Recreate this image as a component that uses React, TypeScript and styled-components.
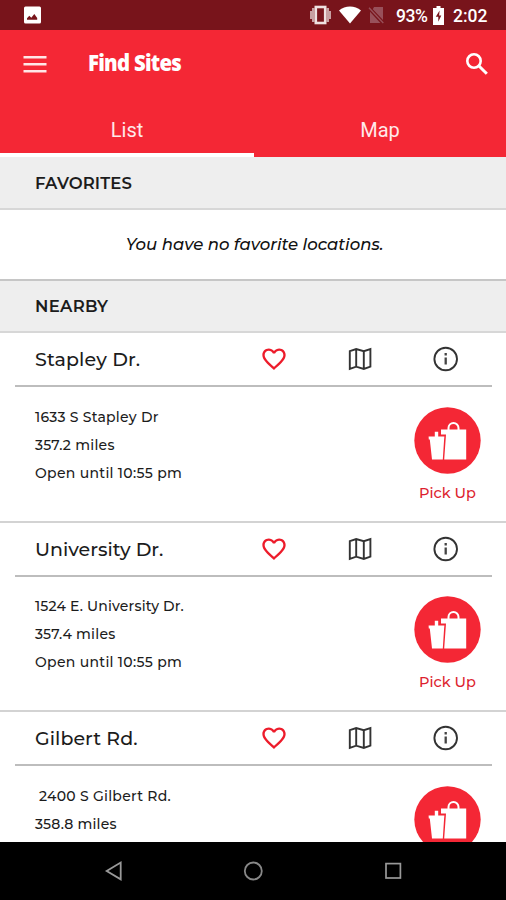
import React from "react";
import styled, { createGlobalStyle } from "styled-components";

const Global = createGlobalStyle`
  * { box-sizing: border-box; }
  body { margin: 0; background: #fff; font-family: Montserrat, Inter, sans-serif; }
`;

const Screen = styled.div`
  width: 506px;
  height: 900px;
  display: flex;
  flex-direction: column;
  overflow: hidden;
  background: #fff;
  color: #1c1c1c;
`;

const StatusBar = styled.div`
  height: 30px;
  flex: none;
  display: flex;
  align-items: center;
  padding: 0 18px 0 23px;
  background: #78141b;
  color: #fff;
  font: 500 17.5px/30px Roboto, sans-serif;
  svg { display: block; flex: none; }
`;

const StatusIcons = styled.div`
  margin-left: auto;
  display: flex;
  align-items: center;
`;

const Signals = styled.div`
  display: flex;
  align-items: center;
  gap: 7px;
`;

const Percent = styled.span`
  margin-left: 11.5px;
  width: 37px;
  letter-spacing: -0.45px;
  padding-top: 2px;
`;

const Clock = styled.span`
  margin-left: 9px;
  width: 35px;
  padding-top: 2px;
`;

const Header = styled.header`
  height: 127px;
  flex: none;
  display: flex;
  flex-direction: column;
  background: #f42735;
  color: #fff;
`;

const TitleBar = styled.div`
  height: 70px;
  display: flex;
  align-items: center;
  padding: 0 17px 2px 23px;
  svg { display: block; flex: none; }
`;

const Title = styled.h1`
  margin: 0 auto 0 41px;
  padding-bottom: 4px;
  font: 900 22px/30px "Noto Sans", sans-serif;
  letter-spacing: -0.8px;
  white-space: nowrap;
  transform: scaleX(0.925);
  transform-origin: left;
`;

const Tabs = styled.nav`
  flex: 1;
  display: grid;
  grid-template-columns: 254px 252px;
`;

const Tab = styled.div<{ $active?: boolean }>`
  padding-top: 19px;
  text-align: center;
  font: 400 20px/22px Roboto, sans-serif;
  color: #ffe9ea;
  border-bottom: 4px solid ${(p) => (p.$active ? "#fff" : "transparent")};
`;

const SectionHeading = styled.h2<{ $track: number; $height: number }>`
  margin: 0;
  flex: none;
  height: ${(p) => p.$height}px;
  padding-left: 35px;
  display: flex;
  align-items: center;
  background: #eee;
  border-bottom: 2px solid #d7d7d7;
  font-size: 16.5px;
  font-weight: 600;
  letter-spacing: ${(p) => p.$track}px;
`;

const EmptyNote = styled.p`
  margin: 0;
  flex: none;
  height: 71px;
  padding: 0 0 1px 3px;
  display: flex;
  align-items: center;
  justify-content: center;
  border-bottom: 2px solid #c6c6c6;
  font-size: 16.5px;
  font-weight: 500;
  font-style: italic;
  color: #111;
`;

const SiteList = styled.div`
  flex: 1;
  min-height: 0;
  overflow: hidden;
`;

const Site = styled.section`
  height: 189.5px;
  border-bottom: 2px solid #d3d3d3;
`;

const SiteTop = styled.div`
  height: 54px;
  margin: 0 14px 0 15px;
  padding: 0 33px 0 20px;
  display: grid;
  grid-template-columns: 225px 86px 86px 26px;
  align-items: center;
  border-bottom: 2px solid #bdbdbd;
  svg { display: block; }
`;

const SiteName = styled.h3<{ $track: number }>`
  margin: 0;
  padding-top: 2px;
  font-size: 19px;
  font-weight: 500;
  line-height: 26px;
  letter-spacing: ${(p) => p.$track}px;
`;

const SiteBody = styled.div`
  display: flex;
  justify-content: space-between;
  padding: 15.5px 18.5px 0 35px;
`;

const Line = styled.div<{ $track: number; $indent?: number }>`
  height: 28px;
  line-height: 28px;
  font-size: 14px;
  font-weight: 500;
  white-space: nowrap;
  padding-left: ${(p) => p.$indent ?? 0}px;
  letter-spacing: ${(p) => p.$track}px;
`;

const PickUp = styled.div`
  width: 80px;
  padding-top: 4px;
  display: flex;
  flex-direction: column;
  align-items: center;
  color: #dd1f30;
  font-size: 14.5px;
  font-weight: 500;
  line-height: 20px;
  svg { display: block; margin-bottom: 9px; }
`;

const NavBar = styled.div`
  height: 58px;
  flex: none;
  display: grid;
  grid-template-columns: 1fr 1fr 1fr;
  padding: 0 43px 0 44px;
  align-items: center;
  justify-items: center;
  background: #000;
`;

const ImageIcon = () => (
  <svg width="18" height="18" viewBox="0 0 18 18">
    <rect x="1" y="0.5" width="17" height="17" rx="1.5" fill="#fff" />
    <path d="M4 13.7v-1.4l2.3-2.6 2 2 3-3.7 2.9 3.9v1.8z" fill="#78141b" />
  </svg>
);
const VibrateIcon = () => (
  <svg width="23" height="20" viewBox="0 0 23 20">
    <path d="M5.5 3v14H3v-3H1V6h2V3zM17.5 3v14H20v-3h2V6h-2V3z" fill="#c8a0a2" />
    <rect x="6.8" y="2" width="9.4" height="16" fill="none" stroke="#efe0e0" strokeWidth="2.6" />
  </svg>
);
const WifiIcon = () => (
  <svg width="22" height="18" viewBox="0 0 22 18">
    <path d="M0 4.6C6-.8 16-.8 22 4.6L11 17.6z" fill="#fff" />
  </svg>
);
const NoSimIcon = () => (
  <svg width="17" height="18" viewBox="0 0 17 18">
    <path d="M6 1h9v13L4.8 3.2zM2 5.8 12.4 17H2z" fill="#98505a" />
    <path d="M1 1.8 15.3 17" stroke="#98505a" strokeWidth="1.4" />
  </svg>
);
const BatteryIcon = () => (
  <svg width="11" height="19" viewBox="0 0 11 19">
    <path d="M3.5 0h4v2H11v17H0V2h3.5z" fill="#fff" />
    <path d="M6.6 4.5 2.8 10.8h2.5v5l3-6.2H6.1z" fill="#78141b" />
  </svg>
);
const MenuIcon = () => (
  <svg width="24" height="19" viewBox="0 0 24 19">
    <path d="M0.5 2.3h23M0.5 9.3h23M0.5 16.3h23" stroke="#ffe6e7" strokeWidth="2.4" />
  </svg>
);
const SearchIcon = () => (
  <svg width="24" height="24" viewBox="0 0 24 24">
    <circle cx="9" cy="9" r="6.7" fill="none" stroke="#fff" strokeWidth="2.6" />
    <path d="m13.5 13.5 8.3 8.3" stroke="#fff" strokeWidth="3" />
  </svg>
);
const HeartIcon = () => (
  <svg width="28" height="28" viewBox="0 0 24 24" fill="#ed1c2b">
    <path d="M16.5 3c-1.74 0-3.41.81-4.5 2.09C10.91 3.81 9.24 3 7.5 3 4.42 3 2 5.42 2 8.5c0 3.78 3.4 6.86 8.55 11.54L12 21.35l1.45-1.32C18.6 15.36 22 12.28 22 8.5 22 5.42 19.58 3 16.5 3zm-4.4 15.55-.1.1-.1-.1C7.14 14.24 4 11.39 4 8.5 4 6.5 5.5 5 7.5 5c1.54 0 3.04.99 3.57 2.36h1.87C13.46 5.99 14.96 5 16.5 5c2 0 3.5 1.5 3.5 3.5 0 2.89-3.14 5.74-7.9 10.05z" />
  </svg>
);
const MapIcon = () => (
  <svg width="28" height="28" viewBox="0 0 28 28" fill="none" stroke="#333" strokeWidth="1.9">
    <path d="M3.8 6.2 10.2 4l7.6 2.2L24.4 4v17.6L17.8 24l-7.6-2.3-6.4 2.2zM10.2 4v17.7M17.8 6.2V24" />
  </svg>
);
const InfoIcon = () => (
  <svg width="28" height="28" viewBox="0 0 28 28">
    <circle cx="13.7" cy="14" r="11.3" fill="none" stroke="#333" strokeWidth="1.9" />
    <path d="M13.7 12.6v7M13.7 8v2.4" stroke="#444" strokeWidth="2.3" />
  </svg>
);
const PickUpIcon = () => (
  <svg width="67" height="67" viewBox="0 0 67 67">
    <circle cx="33.5" cy="33.5" r="33.2" fill="#f42735" />
    <path d="M34.5 24v-3a5 5 0 0 1 10 0v3" fill="none" stroke="#fff" strokeWidth="2" />
    <path d="M27 22.4h25.2v30H30.2L32 27.6H27z" fill="#fff" />
    <path d="M14.6 29.6h6.2v-4.8h3.4v4.8h6.2l-.3 3-1.3 19.8H18L15.8 32.6h-1z" fill="#fff" />
  </svg>
);
const BackIcon = () => (
  <svg width="20" height="22" viewBox="0 0 20 22">
    <path d="M16.7 2.5v16.8L2.7 10.9z" fill="none" stroke="#999" strokeWidth="1.8" />
  </svg>
);
const HomeIcon = () => (
  <svg width="20" height="20" viewBox="0 0 20 20">
    <circle cx="10.3" cy="10" r="8.5" fill="none" stroke="#888" strokeWidth="1.8" />
  </svg>
);
const RecentIcon = () => (
  <svg width="18" height="18" viewBox="0 0 18 18">
    <rect x="2" y="1.6" width="14.4" height="14.4" fill="none" stroke="#999" strokeWidth="1.7" />
  </svg>
);

type Row = { text: string; track: number; indent?: number };
const sites: { name: string; track: number; action?: string; lines: Row[] }[] = [
  {
    name: "Stapley Dr.",
    track: 0.12,
    action: "Pick Up",
    lines: [
      { text: "1633 S Stapley Dr", track: 0.25 },
      { text: "357.2 miles", track: 0.28 },
      { text: "Open until 10:55 pm", track: 0.3 },
    ],
  },
  {
    name: "University Dr.",
    track: 0,
    action: "Pick Up",
    lines: [
      { text: "1524 E. University Dr.", track: 0.18 },
      { text: "357.4 miles", track: 0.25 },
      { text: "Open until 10:55 pm", track: 0.3 },
    ],
  },
  {
    name: "Gilbert Rd.",
    track: 0.05,
    lines: [
      { text: "2400 S Gilbert Rd.", track: 0.27, indent: 4 },
      { text: "358.8 miles", track: 0.22 },
    ],
  },
];

export default function App() {
  return (
    <Screen>
      <Global />
      <StatusBar>
        <ImageIcon />
        <StatusIcons>
          <Signals>
            <VibrateIcon />
            <WifiIcon />
            <NoSimIcon />
          </Signals>
          <Percent>93%</Percent>
          <BatteryIcon />
          <Clock>2:02</Clock>
        </StatusIcons>
      </StatusBar>
      <Header>
        <TitleBar>
          <MenuIcon />
          <Title>Find Sites</Title>
          <SearchIcon />
        </TitleBar>
        <Tabs>
          <Tab $active>List</Tab>
          <Tab>Map</Tab>
        </Tabs>
      </Header>
      <SectionHeading $height={53} $track={0.1}>FAVORITES</SectionHeading>
      <EmptyNote>You have no favorite locations.</EmptyNote>
      <SectionHeading $height={52} $track={0.3}>NEARBY</SectionHeading>
      <SiteList>
        {sites.map((s) => (
          <Site key={s.name}>
            <SiteTop>
              <SiteName $track={s.track}>{s.name}</SiteName>
              <HeartIcon />
              <MapIcon />
              <InfoIcon />
            </SiteTop>
            <SiteBody>
              <div>
                {s.lines.map((l) => (
                  <Line key={l.text} $track={l.track} $indent={l.indent}>{l.text}</Line>
                ))}
              </div>
              <PickUp>
                <PickUpIcon />
                {s.action}
              </PickUp>
            </SiteBody>
          </Site>
        ))}
      </SiteList>
      <NavBar>
        <BackIcon />
        <HomeIcon />
        <RecentIcon />
      </NavBar>
    </Screen>
  );
}
